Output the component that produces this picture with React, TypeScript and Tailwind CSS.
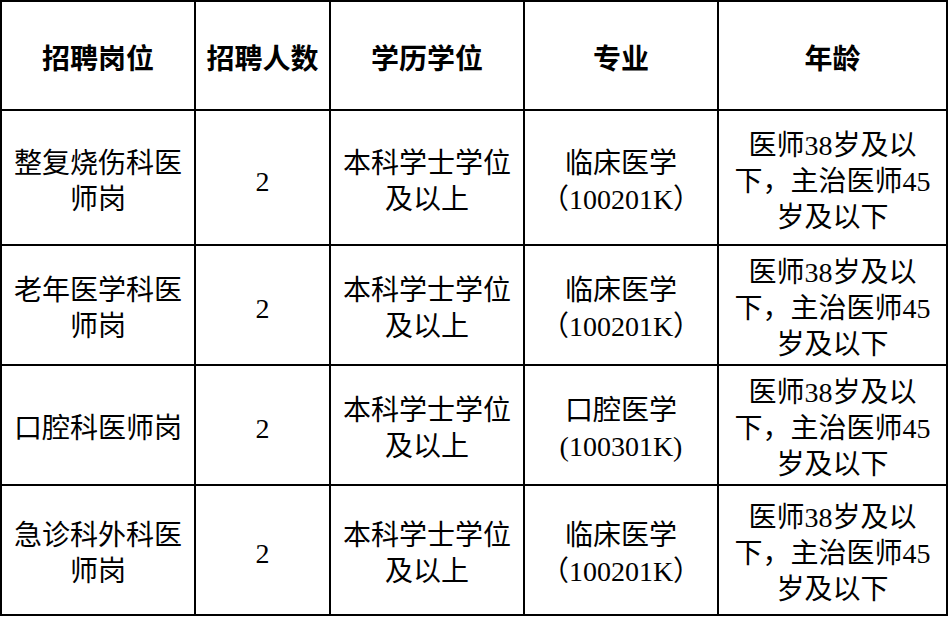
const headers = ["招聘岗位", "招聘人数", "学历学位", "专业", "年龄"];

const ageLines = ["医师38岁及以", "下，主治医师45", "岁及以下"];
const degreeLines = ["本科学士学位", "及以上"];

const rows: string[][][] = [
  [["整复烧伤科医", "师岗"], ["2"], degreeLines, ["临床医学", "（100201K）"], ageLines],
  [["老年医学科医", "师岗"], ["2"], degreeLines, ["临床医学", "（100201K）"], ageLines],
  [["口腔科医师岗"], ["2"], degreeLines, ["口腔医学", "(100301K)"], ageLines],
  [["急诊科外科医", "师岗"], ["2"], degreeLines, ["临床医学", "（100201K）"], ageLines],
];

export default function App() {
  return (
    <div className="min-h-screen bg-white text-black">
      <div
        className="grid w-fit grid-cols-[192px_133px_192px_192px_227px] grid-rows-[107px_133px_118px_118px_128px] gap-[2px] bg-black p-[2px]"
        style={{ fontFamily: '"Liberation Serif", "Noto Sans CJK SC", serif' }}
      >
        {headers.map((h) => (
          <div key={h} className="flex items-center justify-center bg-white pt-[8px] text-[28px] font-semibold leading-[36px]">
            {h}
          </div>
        ))}
        {rows.map((row, r) =>
          row.map((cell, c) => (
            <div
              key={`${r}-${c}`}
              className="flex flex-col items-center justify-center bg-white pt-[8px] text-center text-[28px] leading-[36px] whitespace-nowrap"
            >
              {cell.map((line, i) => (
                <span key={i}>{line}</span>
              ))}
            </div>
          ))
        )}
      </div>
    </div>
  );
}
